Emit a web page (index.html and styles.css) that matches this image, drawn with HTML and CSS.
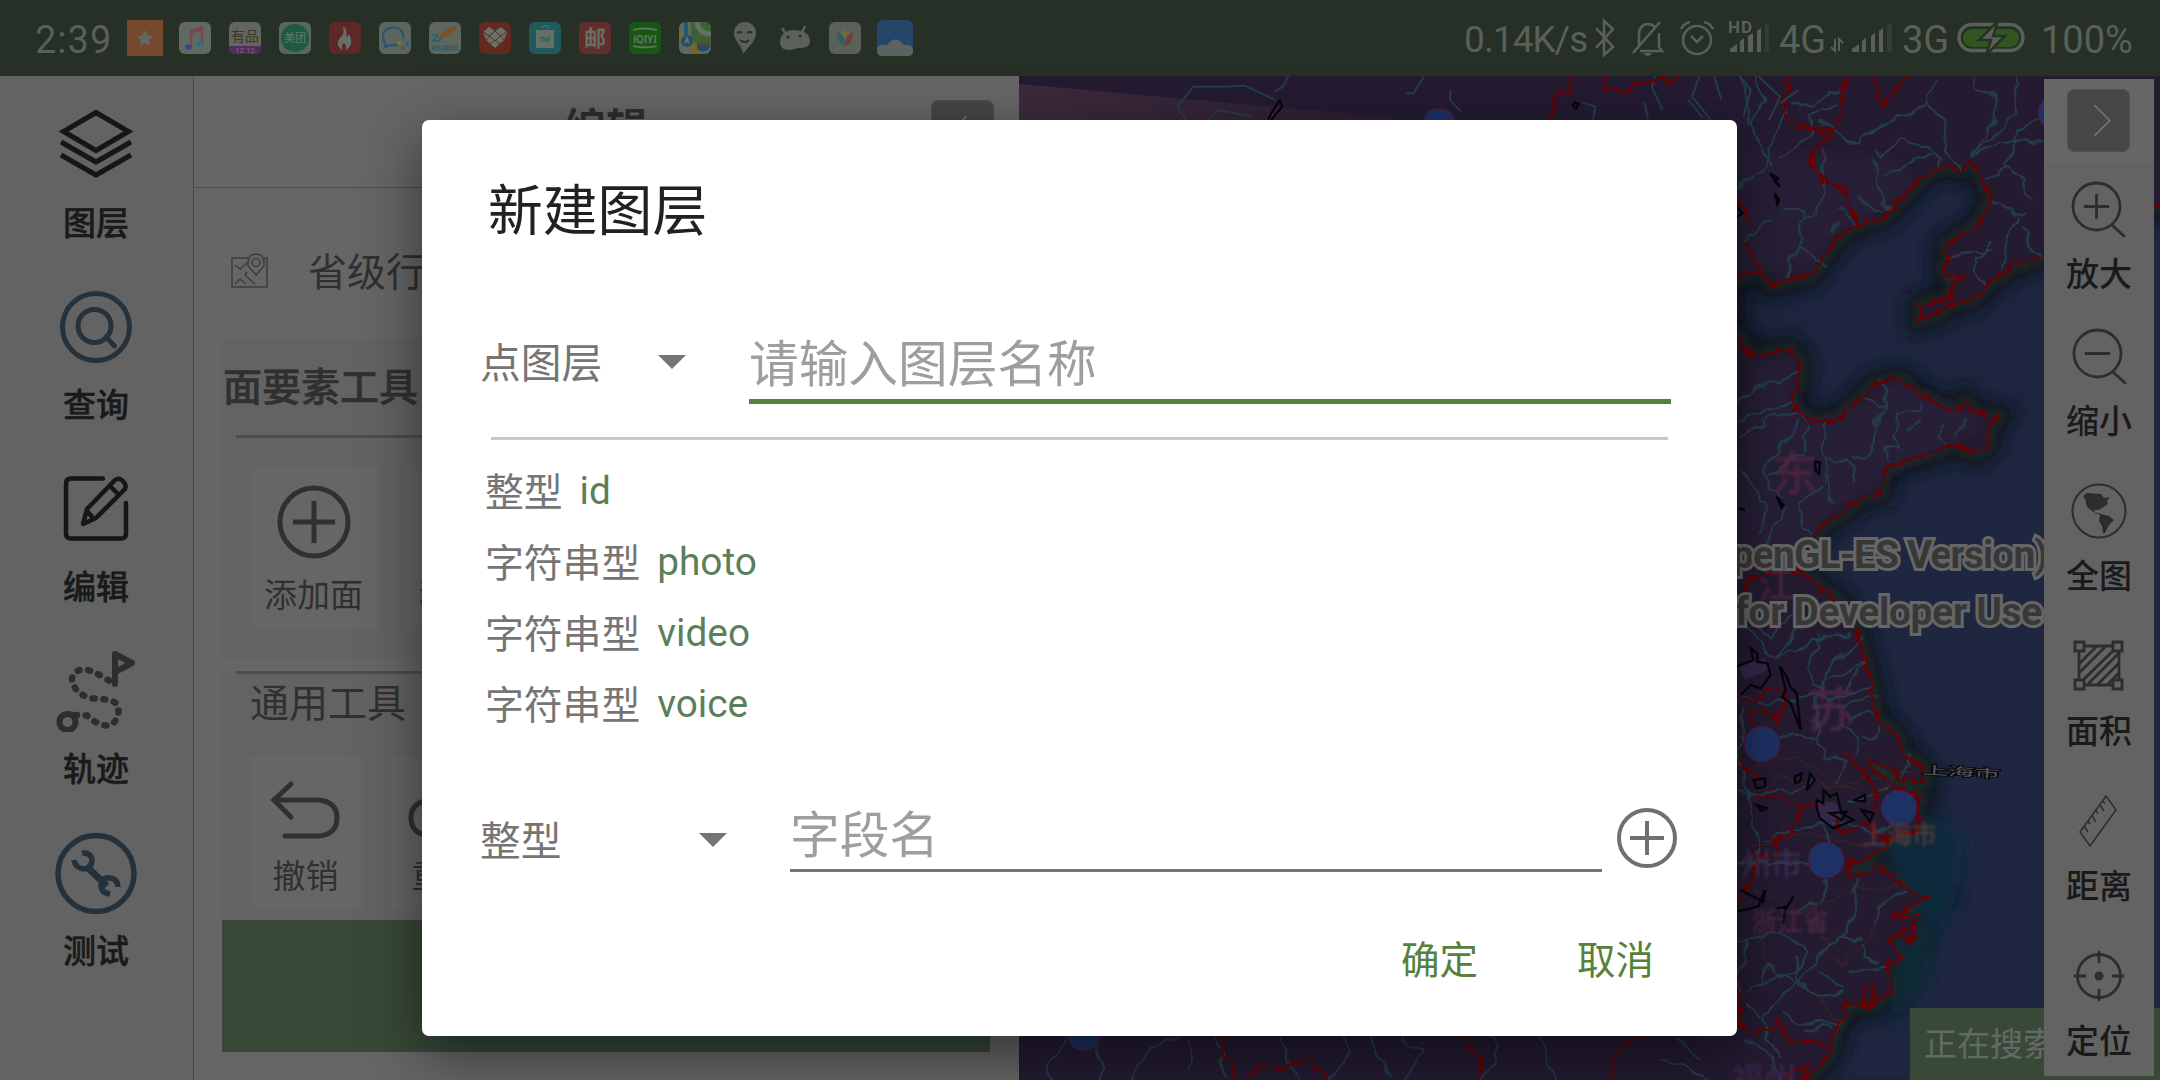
FILE: index.html
```html
<!DOCTYPE html>
<html lang="zh-CN">
<head>
<meta charset="utf-8">
<title>新建图层</title>
<link rel="stylesheet" href="styles.css">
</head>
<body>
<div class="screen">
  <header class="status">
    <span class="clock">2:39</span>
    <div class="apps">
      <svg class="app-lg" viewBox="0 0 36 36"><rect width="36" height="36" fill="#75492d"/><path d="M18 10l2.600 5.200 5.600.8-4 4 1 5.800-5.200-2.700-5.200 2.700 1-5.800-4-4 5.600-.8z" fill="#626a61"/></svg>
      <svg viewBox="0 0 32 32"><rect width="32" height="32" rx="6" fill="#616a61"/><path d="M12 25V9l11-3v17" fill="none" stroke="#7a4556" stroke-width="2.600"/><path d="M12 8.500l11-3v3l-11 3z" fill="#7c434c"/><ellipse cx="9.500" cy="25" rx="3.500" ry="2.800" fill="#3d4482"/><ellipse cx="20.500" cy="22.500" rx="3.500" ry="2.800" fill="#32716f"/></svg>
      <svg viewBox="0 0 32 32"><rect width="32" height="32" rx="6" fill="#5f675f"/><path d="M0 24h32v2a6 6 0 0 1-6 6H6a6 6 0 0 1-6-6z" fill="#542a61"/><text x="16" y="19" class="t" font-size="14" fill="#423620">有品</text><text x="16" y="31" class="t" font-size="8" fill="#77707a">12.12</text></svg>
      <svg viewBox="0 0 32 32"><rect width="32" height="32" rx="6" fill="#5d665d"/><circle cx="16" cy="16" r="14" fill="#1f5a46"/><text x="16" y="20" class="t" font-size="11" fill="#667768">美团</text></svg>
      <svg viewBox="0 0 32 32"><rect width="32" height="32" rx="6" fill="#5e2826"/><path d="M14 4c6 5 2 8 4 11 2-1 1-3 1-4 6 8 3 15-3 17 2-3 1-5-1-7-2 2-3 4-1 7-7-3-6-9-2-13 3-3 3-6 2-11z" fill="#667068"/></svg>
      <svg viewBox="0 0 32 32"><rect width="32" height="32" rx="6" fill="#5d665e"/><path d="M24 16c2-14-20-14-20-1 0 4 2 5 3 7l-1 3 5-2c4 1 7 0 9-2" fill="none" stroke="#23527a" stroke-width="2"/><circle cx="24" cy="17" r="2" fill="#3b7339"/><circle cx="28" cy="22" r="2" fill="#285f86"/><circle cx="24" cy="26" r="2" fill="#7b4a2a"/><circle cx="20" cy="21" r="2" fill="#807533"/></svg>
      <svg viewBox="0 0 32 32"><rect width="32" height="32" rx="6" fill="#5e675e"/><path d="M9 16c4-7 13-12 19-11-1 5-9 9-14 11z" fill="#7c5128"/><path d="M3 13h6l-5 6h6M12 16l-3 4" stroke="#27606e" fill="none" stroke-width="1.500"/><text x="16" y="28" class="t" font-size="6" textLength="28" fill="#27556a">和包·福建会</text></svg>
      <svg viewBox="0 0 32 32"><rect width="32" height="32" rx="6" fill="#612920"/><path d="M10 5l6 4 6-4 6 5-3 8-9 8-9-8-3-8z" fill="#697269"/><path d="M4 10l6 4 6-5 6 5 6-5M7 18l4-4 5 5 5-5 4 4M11 22l5-4 5 4" stroke="#612920" fill="none"/></svg>
      <svg viewBox="0 0 32 32"><rect width="32" height="32" rx="6" fill="#215a5d"/><path d="M12 6q4-5 8 0" fill="none" stroke="#6c7569"/><rect x="7" y="8" width="18" height="18" fill="#657068"/><text x="16" y="20" class="t" font-size="9" font-weight="bold" fill="#266163">mi</text></svg>
      <svg viewBox="0 0 32 32"><rect width="32" height="32" rx="6" fill="#602e2b"/><text x="16" y="24" class="t" font-size="22" font-weight="bold" fill="#6b6e65">邮</text></svg>
      <svg viewBox="0 0 32 32"><rect width="32" height="32" rx="6" fill="#185616"/><path d="M4 8q12-3 24 0M4 24q12 3 24 0" stroke="#63755f" stroke-width="1.800" fill="none"/><text x="16" y="20.500" class="t" font-size="11" font-weight="bold" fill="#63755f">iQIYI</text></svg>
      <svg viewBox="0 0 32 32"><rect width="32" height="32" rx="6" fill="#5f685e"/><path d="M16 0h10a6 6 0 0 1 6 6v20H20l-8-10V0z" fill="#3d6133"/><path d="M0 8q10 2 24 24H14Q8 22 0 18z" fill="#74692d"/><path d="M18 0q2 12 14 12" stroke="#667064" stroke-width="5" fill="none"/><path d="M7 0v14" stroke="#285679" stroke-width="4"/><circle cx="8" cy="19" r="6" fill="#244f70"/><path d="M8 14l3 8-3-2-3 2z" fill="#6c7470"/><path d="M18 22h12v5q-6 5-12 0z" fill="#254c70"/><path d="M18 22h12" stroke="#713730" stroke-width="2"/></svg>
      <svg viewBox="0 0 32 32"><path d="M16 0a11 11 0 0 1 11 11c0 8-8 14-13 21 0-7-9-13-9-21A11 11 0 0 1 16 0z" fill="#59615a"/><path d="M8 11q3-2 5 0M18 11q3-2 5 0M11 18q5 4 9 0" stroke="#273028" stroke-width="2" fill="none"/></svg>
      <svg viewBox="0 0 32 32"><path d="M1 20c0-8 6-12 14-12s16 3 16 11c0 5-4 7-10 7-4 0-6 2-11 2-6 0-9-3-9-8z" fill="#59615a"/><path d="M3 6l4 6M26 4l-3 7" stroke="#59615a" stroke-width="2.500"/><circle cx="9" cy="15" r="1.500" fill="#273028"/><circle cx="21" cy="14" r="1.500" fill="#273028"/></svg>
      <svg viewBox="0 0 32 32"><rect width="32" height="32" rx="6" fill="#596159"/><path d="M16 7l4 4-4 6-4-6z" fill="#716a3c"/><path d="M8 10q8 3 8 14-8-2-8-14z" fill="#2d6065"/><path d="M24 10q-8 3-8 14 8-2 8-14z" fill="#753c3d"/></svg>
      <svg class="app-lg" viewBox="0 0 36 36"><rect width="36" height="36" rx="6" fill="#254669"/><path d="M5 36a5.500 5.500 0 0 1 0-11h5q8-11 17 0h4a5.500 5.500 0 0 1 0 11z" fill="#5a635f"/></svg>
    </div>
    <div class="signals">
      <span class="rate">0.14K/s</span>
      <svg class="bt" viewBox="0 0 22 48"><path d="M2 14l17 19-9 8V7l9 8L2 34" class="sl"/></svg>
      <svg class="bell" viewBox="0 0 34 48"><path d="M8 33V20c0-6 4-10 9-10 3 0 5 1 7 3M28 19v14l3 4H9M2 39L29 8" class="sl"/><path d="M12 39h9q-4 6-9 0z" fill="#586058"/></svg>
      <svg class="alarm" viewBox="0 0 36 48"><circle cx="18" cy="26" r="14" class="sl"/><path d="M12 22l6 6 6-6M2 15q3-6 9-7M34 15q-3-6-9-7" class="sl"/></svg>
      <svg class="hd" viewBox="0 0 42 48"><text x="-1" y="19" font-size="17" textLength="24" font-weight="bold" fill="#586058" font-family="Roboto">HD</text><path d="M1 38v-3l7-5v8zM11 27l4-3v14h-4zM19 22l5-3v19h-5zM28 17l4-3v24h-4z" fill="#586058"/><path d="M36 11l4-3v30h-4z" fill="#343d34"/></svg>
      <span class="net4">4G</span>
      <svg class="arr" viewBox="0 0 14 48"><path d="M5 25v12l-4-4M9 37V25l4 4" stroke="#586058" fill="none" stroke-width="2"/></svg>
      <svg class="bars" viewBox="0 0 42 48"><path d="M1 38v-3l7-5v8zM11 27l4-3v14h-4zM20 22l4-3v19h-4zM28 17l4-3v24h-4z" fill="#586058"/><path d="M36 11l5-3v30h-5z" fill="#343d34"/></svg>
      <span class="net3">3G</span>
      <svg class="batt" viewBox="0 0 68 48"><rect x="2" y="10.500" width="64" height="26" rx="13" class="sl"/><rect x="6" y="15" width="56" height="18" rx="9" fill="#31561f"/><path d="M41 7L22 26h12l-5 15 19-19H36z" fill="#586058" stroke="#263026" stroke-width="2.500"/></svg>
      <span class="pct">100%</span>
    </div>
  </header>

  <main class="workspace">
    <nav class="rail">
      <div class="nav"><svg viewBox="0 0 82 82"><path d="M41 8.500l32.500 19L41 46.500 8.500 27.500zM6 38l35 20 35-20M6 51l35 20 35-20" fill="none" stroke="#161616" stroke-width="5"/></svg><span>图层</span></div>
      <div class="nav"><svg viewBox="0 0 82 82"><g fill="none" stroke="#25323c" stroke-width="5"><circle cx="41" cy="41" r="33.500"/><circle cx="39.500" cy="40" r="16.500"/><path d="M51 51l8.500 9" stroke-linecap="round"/></g></svg><span>查询</span></div>
      <div class="nav"><svg viewBox="0 0 82 82"><g fill="none" stroke="#161616" stroke-width="4.500" stroke-linecap="round" stroke-linejoin="round"><path d="M48 10.500H16q-5 0-5 5v50q0 5 5 5h50q5 0 5-5V35"/><path d="M28 56l4-15 28-29q4-3 8 1t2 8L41 50zM55 18l8 8M32 43l7 8"/></g></svg><span>编辑</span></div>
      <div class="nav"><svg viewBox="0 0 82 82"><circle cx="12.500" cy="72" r="8" fill="none" stroke="#2e2e2e" stroke-width="6"/><path d="M20 65l12 .5c10 9 25 17 31 0 3-16-8-16-25-17-16-2-24-17-20-23 9-14 26 0 38 6" fill="none" stroke="#2e2e2e" stroke-width="6.500" stroke-linecap="round" stroke-dasharray="2 8.700"/><path d="M60 34V4l17 9-17 9" fill="none" stroke="#2e2e2e" stroke-width="6" stroke-linecap="round" stroke-linejoin="round"/></svg><span>轨迹</span></div>
      <div class="nav"><svg viewBox="0 0 82 82"><g fill="none" stroke="#25323c"><circle cx="41" cy="41.500" r="38" stroke-width="5.500"/><path d="M31 34l21 20" stroke-width="7"/><path d="M27 21q9-1 10 7 0 8-8 9-9-1-10-9M55 62q-9-1-9-9 1-8 9-7 8 1 8 9" stroke-width="5.500"/></g></svg><span>测试</span></div>
    </nav>

    <section class="panel">
      <div class="panel-head"><h2>编辑</h2><button class="fold"><svg viewBox="0 0 62 62"><path d="M35 16L20 31l15 15" fill="none" stroke="#777" stroke-width="1.500"/></svg></button></div>
      <div class="layer-row"><svg viewBox="0 0 38 36"><g fill="none" stroke="#3d3d3d" stroke-width="1.500"><path d="M17 5H1v29h35V5h-3M25 22l-8-9q-1-12 8-12t8 12zM4 12l5 4 7-6M4 31l5-5 6 5M16 19l-2 3 10 9"/><circle cx="25" cy="9.500" r="4"/></g></svg><span>省级行政区</span></div>
      <div class="group group-a">
        <h3>面要素工具</h3><hr>
        <div class="cards">
          <div class="card"><svg viewBox="0 0 74 74"><g fill="none" stroke="#303030" stroke-width="5"><circle cx="37" cy="37" r="34"/><path d="M16 37h42M37 16v42"/></g></svg><span>添加面</span></div>
          <div class="card"><svg viewBox="0 0 74 74"></svg><span>移动面</span></div>
        </div>
      </div>
      <div class="group group-b">
        <hr><h4>通用工具</h4>
        <div class="cards">
          <div class="card"><svg viewBox="0 0 74 60"><path d="M22 4L5 20l17 17M6 20h44q18 2 18 18T50 56H16" fill="none" stroke="#303030" stroke-width="5" stroke-linecap="round"/></svg><span>撤销</span></div>
          <div class="card"><svg viewBox="0 0 74 60"><path d="M52 4l17 16-17 17M68 20H22Q3 22 3 38t19 18h36" fill="none" stroke="#303030" stroke-width="5" stroke-linecap="round"/></svg><span>重做</span></div>
        </div>
      </div>
      <div class="submit"></div>
    </section>

    <section class="map">
      <svg class="canvas" viewBox="1019 76 1141 1004">
        <defs>
          <filter id="soft" x="-20%" y="-20%" width="140%" height="140%"><feGaussianBlur stdDeviation="24"/></filter>
          <filter id="soft2" x="-20%" y="-20%" width="140%" height="140%"><feGaussianBlur stdDeviation="12"/></filter>
          <filter id="glow"><feGaussianBlur stdDeviation="1.500"/></filter>
          <filter id="rough" x="-5%" y="-5%" width="110%" height="110%"><feTurbulence type="fractalNoise" baseFrequency=".035" numOctaves="2" seed="4"/><feDisplacementMap in="SourceGraphic" scale="34" xChannelSelector="R" yChannelSelector="G"/></filter>
          <filter id="wavy" x="-5%" y="-5%" width="110%" height="110%"><feTurbulence type="fractalNoise" baseFrequency=".018" numOctaves="2" seed="8"/><feDisplacementMap in="SourceGraphic" scale="44" xChannelSelector="R" yChannelSelector="G"/></filter>
          <filter id="rough-s" x="-5%" y="-20%" width="110%" height="140%"><feTurbulence type="fractalNoise" baseFrequency=".1" numOctaves="2" seed="4"/><feDisplacementMap in="SourceGraphic" scale="12" xChannelSelector="R" yChannelSelector="G"/></filter>
          <filter id="wavy-s" x="-5%" y="-20%" width="110%" height="140%"><feTurbulence type="fractalNoise" baseFrequency=".05" numOctaves="2" seed="8"/><feDisplacementMap in="SourceGraphic" scale="15" xChannelSelector="R" yChannelSelector="G"/></filter>
          <linearGradient id="wedge"><stop offset="0" stop-color="#3d2a3c"/><stop offset="1" stop-color="#291e34"/></linearGradient>
          <path id="coast" d="M1290 400L941 560 860 585 800 625 765 650 730 690 665 700 630 730 570 748 570 705 660 685 665 640 710 618 650 620 640 590 655 570 645 525 690 500 740 465 785 390 765 350 745 300 720 272 690 300 640 285 580 320 510 390 470 435 385 465 325 505 285 555 250 615 190 628 125 645 90 605 40 615 0 640 0 780 30 800 60 860 140 845 185 840 215 890 200 960 180 985 210 1030 250 1052 330 1052 350 1015 410 975 430 945 500 925 530 935 560 980 600 985 630 1015 690 1018 705 995 740 1030 805 1040 780 1080 770 1130 735 1150 700 1135 680 1120 610 1150 500 1180 465 1200 455 1270 390 1280 340 1330 280 1360 255 1405 230 1440 200 1510 240 1520 275 1560 330 1595 375 1670 400 1760 425 1850 440 1950 505 2000 515 2050 575 2090 585 2140 530 2130 440 2080 410 2070 430 2100 500 2150 575 2180 560 2210 570 2280 480 2310 400 2380 355 2370 355 2410 380 2418 450 2390 490 2420 530 2460 595 2480 540 2510 475 2550 565 2530 560 2600 480 2610 510 2660 470 2690 490 2770 420 2810 345 2800 350 2830 320 2870 300 2950 230 3030 180 3100H1400V400z"/>
        </defs>
        <rect x="1019" y="76" width="1141" height="1004" fill="#1e2640"/>
        <g transform="translate(1730 70) scale(.33333)">
          <use href="#coast" fill="none" stroke="#0e171c" stroke-width="80" filter="url(#soft)"/>
          <use href="#coast" fill="none" stroke="#242c2a" stroke-width="26" filter="url(#soft2)"/>
          <path d="M460 2290Q620 2200 700 2300 700 2500 600 2620 480 2400 460 2290z" fill="#0e2a3d" filter="url(#soft)"/>
          <path d="M500 2600Q620 2480 600 2700 560 2800 480 2860z" fill="#0e2934" filter="url(#soft)"/>
          <path fill-rule="evenodd" fill="#241b31" d="M-2200 0H1400V3100H-2200zM1290 400L941 560 860 585 800 625 765 650 730 690 665 700 630 730 570 748 570 705 660 685 665 640 710 618 650 620 640 590 655 570 645 525 690 500 740 465 785 390 765 350 745 300 720 272 690 300 640 285 580 320 510 390 470 435 385 465 325 505 285 555 250 615 190 628 125 645 90 605 40 615 0 640 0 780 30 800 60 860 140 845 185 840 215 890 200 960 180 985 210 1030 250 1052 330 1052 350 1015 410 975 430 945 500 925 530 935 560 980 600 985 630 1015 690 1018 705 995 740 1030 805 1040 780 1080 770 1130 735 1150 700 1135 680 1120 610 1150 500 1180 465 1200 455 1270 390 1280 340 1330 280 1360 255 1405 230 1440 200 1510 240 1520 275 1560 330 1595 375 1670 400 1760 425 1850 440 1950 505 2000 515 2050 575 2090 585 2140 530 2130 440 2080 410 2070 430 2100 500 2150 575 2180 560 2210 570 2280 480 2310 400 2380 355 2370 355 2410 380 2418 450 2390 490 2420 530 2460 595 2480 540 2510 475 2550 565 2530 560 2600 480 2610 510 2660 470 2690 490 2770 420 2810 345 2800 350 2830 320 2870 300 2950 230 3030 180 3100H1400V400z"/>
          <path d="M20 235L500 265 560 330 440 430 300 500 240 600 20 600zM60 890L180 860 190 980 240 1060 400 1000 500 940 780 1050 680 1110 430 1240 280 1340 180 1500 20 1500z" fill="#2c213a" opacity=".6" filter="url(#soft2)"/>
          <g fill="none" stroke="#42281f" stroke-width="5" opacity=".6" filter="url(#wavy)"><path d="M20 2230L150 2120 330 2150 560 2100M60 2330L240 2290 430 2340M30 2420L200 2530 380 2460 540 2440M80 2540L110 2690 230 2750 340 2860M250 2560L330 2680 430 2600 450 2490M20 2100L200 2060 420 2200 540 2080"/></g>
          <g fill="none" stroke="#233e4a" stroke-width="6.500" filter="url(#wavy)">
            <path d="M40 15L55 130 65 200 130 290M85 20L100 90 65 160M170 100L130 200 110 290 25 350M335 65L290 65 250 110 190 100M320 100L245 140 245 190 145 270M265 160L310 170 340 205 390 220 430 180 530 135 590 100 620 20M590 100L650 170 655 240 690 300M730 20L740 55 800 80 790 150 725 260M860 15L850 90 860 130 790 195 725 250 860 210 940 215M820 290L850 230 870 180 920 150M760 330L830 290 880 330 905 390M445 235L460 260 510 210 600 235 635 260 630 285M465 320L510 290 600 250M440 270L435 330 475 430M280 230L280 300 290 370 225 440 210 530 285 585M210 530L175 570 170 620M45 520L60 490 120 450M150 410L215 420 225 450M380 380L465 435M330 410L375 470M330 450L310 490M785 400L820 420 880 430M880 460L905 540 935 560M870 440L830 500 820 600M650 570L710 545 785 540M785 510L740 570 740 610 765 640"/>
            <path d="M20 1000L80 950 210 905M20 1050L130 1010 200 1000M20 1110L130 1030 230 1045M240 1060L210 1150 120 1220M210 1060L110 1180 110 1250 160 1290M290 1050L280 1130 300 1200 280 1250M300 1160L370 1190 370 1230M410 975L440 1010 465 1020 455 930M460 1020L430 1080 420 1150 370 1170M580 990L570 1010 510 1030 490 1100 510 1130 470 1130 475 1180M570 1050L530 1080M640 1060L620 1100 660 1130M715 1045L670 1100M30 1200L70 1240 110 1310 90 1390M160 1320L110 1420 90 1490M270 1260L210 1300 220 1370 250 1400M300 1220L295 1260 310 1300"/>
            <path d="M20 1660L80 1700 130 1770 200 1690 270 1640M30 1600L120 1700 230 1580 330 1610M130 1770L300 1700 360 1690M390 1710L300 1790 260 1880 270 1960 260 2000 290 2060M270 1700L240 1790 270 1870M400 1770L370 1800 290 1830M205 1878L350 1878 420 1840M410 1760L380 1820 350 1880M20 1870L120 1910 200 1880M350 1905L440 1875M360 1935L430 1940M330 1960L380 2000 380 2050M400 2000L440 2000 455 1960M20 2000L150 2000 260 2000M290 2060L350 2070 320 2140M20 2170L90 2170 190 2160 250 2130M480 2150L400 2180 350 2200M540 2060L520 2120M40 1900L30 2060 60 2190 90 2330 60 2390M285 2270L285 2330M110 2310L230 2270 285 2265 360 2250 420 2290 480 2270M20 2380L230 2380 340 2370M380 2420L380 2520 340 2600M290 2420L280 2490 200 2520M530 2460L460 2490 430 2560M20 2610L160 2590 240 2640 200 2700 50 2760M400 2610L330 2600 270 2660 210 2720 90 2850 150 2960M200 2660L200 2720 260 2780 340 2770M270 2700L340 2760M350 2700L470 2690M20 2760L50 2640 50 2600M90 2740L110 2680 210 2740M160 2820L200 2860 330 2860M50 2900L130 2960 150 3030M50 2800L90 2840M220 2880L310 2870M400 2620L410 2660 450 2680"/>
          </g>
          <g fill="none" stroke="#660003" stroke-width="8" filter="url(#rough)">
            <use href="#coast"/>
            <path d="M175 15L180 60 150 80 165 110 170 160 310 185 335 120 340 60 355 15M425 15L460 110 480 70 545 15M310 185L260 235 240 275 270 310 295 345 340 350 355 400 385 465M20 390L50 420 60 460M50 520L70 570 90 600M20 1880L90 1890 110 1855 170 1870 150 1950 90 1920 60 1930 70 1980M20 2070L90 2130M75 2180L160 2180 210 2210 190 2290 130 2320 145 2360 75 2350 70 2430 20 2500M210 2210L290 2210 340 2290 420 2250 430 2300 480 2310M420 2250L450 2190 410 2120 340 2050M20 2740L30 2870 80 2890 150 2850 180 2920 260 2910 300 2940M400 2760L430 2740 430 2800 400 2800zM480 2610L560 2560 540 2620 500 2600M160 3015L230 2990 220 3030M20 1620L60 1520 150 1510"/>
          </g>
          <path d="M260 2190l60 10 15 45-60 20zM25 1785l80-20 10 35-70 30z" fill="#3a2d55" opacity=".7"/>
          <g fill="none" stroke="#07050c" stroke-width="7"><path d="M120 310l25 15-10 10 15 15-20-25zM135 370l12 20-5 12zM22 410l15 20-15 10M255 1175l15 2-3 35-10-10zM140 1280l20 25-5 8zM25 1315l20 5M20 1790l50-20-8-35 20 15 0 25 30 5 10 35-30 40-30-10-30 30M150 1790l20 30 10 30 20 20 12 110-30-80-25-20 10-20zM70 2130l35-5 0 25-25 5zM195 2120l20-10-5 25-15 5zM240 2110l15 20-25 30zM80 2205l30 10-15 8zM260 2190l20 10 0-40 20 20 20-10 15 60 35 20-60 25-40-30-10-30zM300 2230l50-5-15 25zM375 2190l30-15 0 20zM395 2220l35 10-10 25zM30 2460l70 35 5-35-20 50-65 15M190 2480l-25 40-5 40M140 2515l30-5"/></g>
        </g>
        <g transform="translate(1010 70) scale(.7334 .33333)">
          <path d="M12 42L570 152H12z" fill="url(#wedge)"/>
          <g fill="none" stroke-width="2"><path d="M240 150L228 110 250 50 290 50 320 47 362 90M270 148L285 120 330 140M380 18L372 50 360 65M565 18L550 70H540M601 60L600 90 615 125M780 97L798 110 795 148M880 18L875 50 890 120M940 18L930 80 955 148M960 18L970 90M995 18L1010 60 1000 140M1020 18L1050 80 1035 150M1075 60L1050 100M925 90L945 145M865 95L870 148" stroke="#233e4a" vector-effect="non-scaling-stroke"/><path d="M765 18L763 70 748 65 740 90 745 110 735 150M812 18L810 60 825 55 835 68 845 64 850 40 870 38 895 18M890 22L897 42 910 22" stroke="#660003" stroke-width="2.600" vector-effect="non-scaling-stroke"/><path d="M368 90l-12 40-4 18M368 90l3 20-15 40M770 97l5 5-3 14-5-10z" stroke="#060409" vector-effect="non-scaling-stroke"/></g>
        </g>
        <g fill="none" stroke="#233e4a" stroke-width="2" filter="url(#wavy-s)"><path d="M1050 1080Q1050 1055 1070 1036M1100 1080V1040M1130 1080L1150 1050 1180 1036M1190 1040V1070M1215 1036L1225 1080M1280 1036L1300 1080M1330 1080L1350 1050 1345 1036M1370 1036L1390 1080M1405 1080L1420 1050 1400 1036M1480 1080L1500 1050 1490 1036M1540 1036L1555 1080M1660 1060L1690 1070 1710 1080M1675 1036L1700 1060"/></g>
        <g fill="none" stroke="#660003" stroke-width="2.600" filter="url(#rough-s)"><path d="M1227 1030L1222 1052 1232 1065 1235 1085 1260 1065 1280 1070 1312 1057 1328 1085M1470 1030L1468 1048 1482 1056 1478 1085M1645 1030L1615 1053 1612 1085"/></g>
        <g fill="#1d3164" stroke="#5b1028"><circle cx="1439" cy="125" r="17"/><circle cx="2055" cy="113" r="17"/><circle cx="1762" cy="744" r="18"/><circle cx="1899" cy="808" r="18"/><circle cx="1826" cy="860" r="18"/><circle cx="1084" cy="1034" r="17"/></g>
        <g class="places" filter="url(#glow)"><text x="1772" y="490" font-size="46" fill="#55283f">东</text><text x="1807" y="727" font-size="48" fill="#512b49">苏</text><text x="1758" y="598" font-size="36" fill="#55283f">江</text><text x="1751" y="931" font-size="26" fill="#542b48">浙江省</text><text x="1740" y="875" font-size="31" fill="#43325c">州市</text><text x="1862" y="844" font-size="25" fill="#654039">上海市</text><text x="1732" y="1090" font-size="32" fill="#3e2c55">福州</text></g>
        <text class="coast-name" transform="translate(1922 774) rotate(3) scale(1 .45)" font-size="26">上海市</text>
        <g class="mark"><text x="1732" y="568" textLength="316">penGL-ES Version)</text><text x="1735" y="625" textLength="394">for Developer Use Only</text></g>
      </svg>
      <div class="toast">正在搜索</div>
      <aside class="tools">
        <div class="tools-head"><button class="fold"><svg viewBox="0 0 62 62"><path d="M27 16l15 15-15 15" fill="none" stroke="#777" stroke-width="1.500"/></svg></button></div>
        <div class="tool first"><svg viewBox="0 0 60 60"><g class="tl"><circle cx="27.500" cy="27.500" r="23.500"/><path d="M16 27.500h23M27.500 16v23M43 46l12 11"/></g></svg><span>放大</span></div>
        <div class="tool"><svg viewBox="0 0 60 60"><g class="tl"><circle cx="28.500" cy="27.500" r="23.500"/><path d="M17 27.500h23M44 46l12 11"/></g></svg><span>缩小</span></div>
        <div class="tool"><svg viewBox="0 0 60 60"><circle cx="30" cy="30" r="26.500" fill="none" stroke="#2d2d2d" stroke-width="2"/><path d="M15 14l3-2 14 1 3 4 6-1-3 4 1 3-6 4-3 2-5 0 1 2 6 2 8 2 5 4-5 5-4 8h-2l-1-7-3-5 1-6-8-4-5-4-2-8-2-3z" fill="#2d2d2d"/></svg><span>全图</span></div>
        <div class="tool"><svg viewBox="0 0 60 60"><g class="tl"><path d="M10 10h40v39H10zM10 28l18-18M10 37l27-27M11 47L48 11M18 49l31-31M28 49l22-22M38 49l12-12"/><g fill="#636363"><path d="M6 6h9v9H6zM44 6h9v9h-9zM6 44h9v9H6zM44 44h9v9h-9z"/></g></g></svg><span>面积</span></div>
        <div class="tool"><svg viewBox="0 0 60 60"><path d="M11 41L37 5l10 14-26 36zM15 35l4 6M19 30l2 3M23 25l4 6M27 19l2 4M31 14l4 6M34 10l2 3" fill="none" stroke="#2d2d2d" stroke-width="1.500"/></svg><span>距离</span></div>
        <div class="tool"><svg viewBox="0 0 60 60"><g class="tl"><circle cx="30" cy="30" r="21.500"/><path d="M30 6v10M30 44v10M6 30h10M44 30h10"/></g><circle cx="30" cy="30" r="4.500" fill="#2d2d2d"/></svg><span>定位</span></div>
      </aside>
    </section>
  </main>

  <div class="dialog">
    <h1>新建图层</h1>
    <div class="name-row"><div class="spinner"><span>点图层</span><i></i></div><div class="input active">请输入图层名称</div></div>
    <hr>
    <ul>
      <li><span>整型</span><b>id</b></li>
      <li><span>字符串型</span><b>photo</b></li>
      <li><span>字符串型</span><b>video</b></li>
      <li><span>字符串型</span><b>voice</b></li>
    </ul>
    <div class="field-row"><div class="spinner"><span>整型</span><i></i></div><div class="input">字段名</div><svg class="add" viewBox="0 0 62 62"><g fill="none" stroke="#707070" stroke-width="4"><circle cx="31" cy="31" r="28"/><path d="M14 31h34M31 14v34"/></g></svg></div>
    <div class="actions"><span>确定</span><span>取消</span></div>
  </div>
</div>
</body>
</html>
```
FILE: styles.css
```css
* { box-sizing: border-box; margin: 0; padding: 0; }
body { width: 2160px; height: 1080px; overflow: hidden; font-family: Roboto, "Noto Sans CJK SC", sans-serif; background: #666; }
svg { display: block; flex: none; }
button { border: 0; }
hr { border: 0; }
.screen { position: relative; width: 2160px; height: 1080px; display: flex; flex-direction: column; overflow: hidden; }

.status { flex: none; height: 76px; background: #263026; display: flex; align-items: center; padding-left: 35px; color: #586058; font-size: 38px; }
.status span { white-space: nowrap; line-height: 76px; padding-top: 3px; }
.clock { width: 92px; letter-spacing: 1px; }
.apps { display: flex; align-items: center; gap: 18px; }
.apps svg { width: 32px; height: 32px; }
.apps .app-lg { width: 36px; height: 36px; }
.apps .app-lg:first-child { margin-right: -2px; }
.apps .app-lg:last-child { margin-left: -2px; }
.apps .t { text-anchor: middle; }
.signals { display: flex; align-items: center; margin-left: 551px; }
.signals svg { height: 48px; overflow: visible; }
.sl { fill: none; stroke: #586058; stroke-width: 2.600; }
.batt .sl { stroke-width: 3.500; }
.rate { width: 130px; font-size: 37px; letter-spacing: -.9px; }
.bt { width: 22px; }
.bell { width: 34px; margin-left: 15px; }
.alarm { width: 36px; margin-left: 14px; }
.hd { width: 42px; margin-left: 14px; }
.net4 { width: 51px; margin-left: 8px; }
.arr { width: 14px; }
.bars { width: 42px; margin-left: 7px; }
.net3 { width: 55px; margin-left: 9px; }
.batt { width: 68px; }
.pct { margin-left: 16px; }

.workspace { flex: 1; min-height: 0; display: flex; }
.rail { width: 194px; background: #636363; border-right: 1px solid #4b4b4b; padding-top: 28px; }
.nav { height: 182px; display: flex; flex-direction: column; align-items: center; padding-right: 1px; }
.nav svg { width: 82px; height: 82px; }
.nav span { margin-top: 18px; line-height: 40px; font-size: 33px; font-weight: 500; color: #1a1a1a; -webkit-text-stroke: .5px; }

.panel { width: 825px; background: #666; }
.panel-head { height: 112px; border-bottom: 1px solid #4e4e4e; position: relative; padding: 24px 25px 0 0; display: flex; justify-content: flex-end; }
.panel-head h2 { flex: 1; padding-left: 87px; text-align: center; line-height: 60px; font-size: 42px; font-weight: 700; color: #2e2e2e; }
.fold { width: 63px; height: 63px; border-radius: 8px; background: #444745; box-shadow: inset 0 0 0 1px #505050; }
.layer-row { height: 151px; display: flex; align-items: center; padding: 14px 0 0 37px; gap: 39px; font-size: 39px; color: #303030; }
.layer-row svg { width: 38px; height: 36px; }
.layer-row span { margin-top: -4px; }
.group { margin-left: 28px; width: 768px; background: #636363; }
.group hr { height: 3px; background: #4d4d4d; margin: 0 14px; }
.group-a { height: 319px; }
.group h3 { height: 96px; line-height: 99px; padding-left: 1px; font-size: 39px; font-weight: 500; color: #303030; -webkit-text-stroke: .5px; }
.group h4 { height: 81px; line-height: 60px; padding-left: 28px; font-size: 39px; font-weight: 400; color: #303030; }
.group-b { height: 249px; margin-top: 13px; }
.cards { display: flex; gap: 28px; padding-left: 28px; }
.group-a .cards { padding-top: 28px; }
.card { background: #666; display: flex; flex-direction: column; align-items: center; font-size: 33px; color: #303030; }
.group-a .card { width: 127px; height: 164px; padding-top: 19px; }
.group-a .card svg { width: 74px; height: 74px; }
.group-a .card span { margin-top: 15px; line-height: 44px; }
.group-b .card { width: 111px; height: 155px; padding-top: 25px; }
.group-b .card svg { width: 74px; height: 60px; }
.group-b .card span { margin-top: 15px; line-height: 44px; }
.submit { margin-left: 28px; width: 768px; height: 132px; background: #384938; }

.map { position: relative; flex: 1; overflow: hidden; }
.canvas { width: 1141px; height: 1004px; }
.places { font-family: "Noto Sans CJK SC", sans-serif; font-weight: 500; opacity: .8; }
.coast-name { fill: #555; stroke: #08090c; stroke-width: 4px; paint-order: stroke; font-family: "Noto Sans CJK SC", sans-serif; }
.mark { font: 700 39px Roboto, sans-serif; fill: #383838; stroke: #666; stroke-width: 6px; paint-order: stroke; }
.toast { position: absolute; left: 891px; right: 0; bottom: 0; height: 72px; line-height: 74px; padding-left: 14px; background: #384938; color: #646966; font-size: 33px; }
.tools { position: absolute; left: 1025px; top: 3px; width: 110px; height: 997px; background: #636363; }
.tools-head { height: 83px; background: #666; padding: 10px 0 0 23px; margin-bottom: 17px; }
.tool { height: 155px; display: flex; flex-direction: column; align-items: center; }
.tool.first { height: 147px; }
.tool svg { width: 60px; height: 60px; }
.tool span { margin-top: 16px; line-height: 40px; font-size: 33px; font-weight: 500; color: #1a1a1a; }
.tl { fill: none; stroke: #2d2d2d; stroke-width: 2.800; stroke-linecap: round; }

.dialog { position: absolute; left: 422px; top: 120px; width: 1315px; height: 916px; border-radius: 7px; background: #fff; box-shadow: 0 18px 60px rgba(0, 0, 0, .5); padding-top: 59px; }
.dialog h1 { height: 60px; line-height: 64px; padding-left: 66px; font-size: 54.800px; font-weight: 400; color: #212121; }
.name-row { display: flex; margin-top: 81px; padding-left: 58px; height: 84px; }
.spinner { display: flex; align-items: center; justify-content: space-between; font-size: 40.700px; color: #757575; }
.spinner span { margin-top: -3px; }
.spinner i { border: 14px solid transparent; border-top-color: #757575; border-bottom: 0; }
.name-row .spinner { width: 206px; margin-right: 63px; }
.input { font-size: 49.700px; color: #9e9e9e; display: flex; align-items: center; }
.input.active { width: 922px; border-bottom: 5px solid #55813a; }
.dialog > hr { height: 3px; background: #c8c8c8; margin: 33px 69px 15px; }
.dialog ul { list-style: none; padding-left: 63px; }
.dialog li { height: 71px; display: flex; align-items: center; gap: 17px; font-size: 38.800px; color: #757575; }
.dialog li span { margin-top: -3px; }
.dialog li b { font-weight: 400; color: #5a7f5a; }
.field-row { display: flex; align-items: center; margin-top: 53px; padding-left: 58px; height: 80px; }
.field-row .spinner { width: 247px; margin: 15px 63px 0 0; }
.field-row .input { width: 812px; height: 80px; border-bottom: 3px solid #757575; }
.add { width: 62px; height: 62px; margin: 12px 0 0 14px; }
.actions { display: flex; justify-content: flex-end; gap: 99px; padding-right: 83px; margin-top: 59px; line-height: 60px; font-size: 38.500px; color: #55813a; }
```
